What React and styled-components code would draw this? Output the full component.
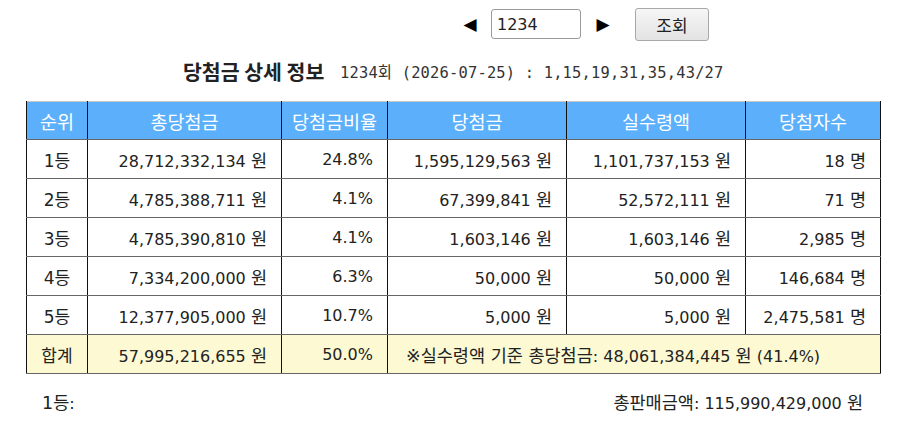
import React from 'react';
import styled, { createGlobalStyle } from 'styled-components';

const GlobalStyle = createGlobalStyle`
  body {
    margin: 0;
    background: #fff;
    font-family: "DejaVu Sans", "Noto Sans CJK KR", sans-serif;
    color: #222;
  }
`;

const Page = styled.div`
  width: 900px;
  height: 425px;
  overflow: hidden;
`;

const Nav = styled.div`
  display: flex;
  align-items: center;
  height: 34px;
  padding: 7px 0 0 462px;
`;

const Arrow = styled.button`
  background: none;
  border: none;
  padding: 0;
  font-size: 17px;
  line-height: 1;
  color: #000;
  width: 16px;
  margin: ${(p) => p.$m};
  cursor: pointer;
  font-family: "DejaVu Sans", sans-serif;
`;

const RoundInput = styled.input`
  width: 90px;
  height: 30px;
  box-sizing: border-box;
  border: 1px solid #9a9a9a;
  border-radius: 3px;
  padding: 0 5px;
  font-size: 16px;
  font-family: "DejaVu Sans", sans-serif;
  color: #222;
`;

const SearchButton = styled.button`
  width: 74px;
  height: 33px;
  border: 1px solid #a8a8a8;
  border-radius: 3px;
  background: linear-gradient(#f6f6f6, #e3e3e3);
  font-size: 17px;
  font-family: "Noto Sans CJK KR", sans-serif;
  color: #222;
  margin-left: 24px;
`;

const InfoLine = styled.div`
  display: flex;
  align-items: center;
  height: 60px;
  padding-left: 183px;
`;

const Title = styled.h2`
  margin: 0;
  font-size: 20.5px;
  font-weight: bold;
  font-family: "Noto Sans CJK KR", sans-serif;
  color: #222;
  width: 157px;
`;

const DrawInfo = styled.span`
  font-family: "DejaVu Sans Mono", "Noto Sans CJK KR", monospace;
  font-size: 15.4px;
  letter-spacing: 0.2px;
  color: #333;
`;

const Table = styled.table`
  margin-left: 26px;
  width: 854px;
  border-collapse: collapse;
  border-top: 1px solid #c8c8c8;
  border-bottom: 1px solid #666;
  table-layout: fixed;
`;

const Th = styled.th`
  background: #5cb0fb;
  color: #fff;
  font-weight: normal;
  font-size: 18.5px;
  font-family: "Noto Sans CJK KR", sans-serif;
  height: 37px;
  padding: 0;
  border-left: 1px solid #111;
  border-right: 1px solid #111;
  border-bottom: 1px solid #666;
`;

const Row = styled.tr`
  background: ${(p) => (p.$total ? '#fcf9d3' : '#fff')};
`;

const Td = styled.td`
  height: 38px;
  padding: ${(p) => (p.$align === 'left' ? '0 0 0 18px' : '0 14px 0 0')};
  text-align: ${(p) => p.$align || 'right'};
  font-size: 16px;
  white-space: nowrap;
  color: #222;
  border-left: 1px solid #111;
  border-right: 1px solid #111;
  border-bottom: 1px solid #666;
`;

const Unit = styled.span`
  font-size: 17.5px;
`;

const RankTd = styled(Td)`
  text-align: center;
  padding: 0;
  font-size: 17px;
`;

const Footer = styled.div`
  display: flex;
  justify-content: space-between;
  align-items: center;
  height: 54px;
  padding: 0 37px 0 42px;
  font-size: 16px;
`;

const rows = [
  ['1등', '28,712,332,134', '24.8%', '1,595,129,563', '1,101,737,153', '18'],
  ['2등', '4,785,388,711', '4.1%', '67,399,841', '52,572,111', '71'],
  ['3등', '4,785,390,810', '4.1%', '1,603,146', '1,603,146', '2,985'],
  ['4등', '7,334,200,000', '6.3%', '50,000', '50,000', '146,684'],
  ['5등', '12,377,905,000', '10.7%', '5,000', '5,000', '2,475,581'],
];

const cols = [
  ['순위', 61],
  ['총당첨금', 194],
  ['당첨금비율', 106],
  ['당첨금', 179],
  ['실수령액', 179],
  ['당첨자수', 135],
];

export default function App() {
  return (
    <Page>
      <GlobalStyle />
      <Nav>
        <Arrow $m="0 13px 0 0">◀</Arrow>
        <RoundInput defaultValue="1234" />
        <Arrow $m="0 0 0 14px">▶</Arrow>
        <SearchButton>조회</SearchButton>
      </Nav>
      <InfoLine>
        <Title>당첨금 상세 정보</Title>
        <DrawInfo>1234회 (2026-07-25) : 1,15,19,31,35,43/27</DrawInfo>
      </InfoLine>
      <Table>
        <colgroup>
          {cols.map(([name, w]) => (
            <col key={name} style={{ width: w }} />
          ))}
        </colgroup>
        <thead>
          <tr>
            {cols.map(([name]) => (
              <Th key={name}>{name}</Th>
            ))}
          </tr>
        </thead>
        <tbody>
          {rows.map((r) => (
            <Row key={r[0]}>
              <RankTd>{r[0]}</RankTd>
              <Td>{r[1]} <Unit>원</Unit></Td>
              <Td>{r[2]}</Td>
              <Td>{r[3]} <Unit>원</Unit></Td>
              <Td>{r[4]} <Unit>원</Unit></Td>
              <Td>{r[5]} <Unit>명</Unit></Td>
            </Row>
          ))}
          <Row $total>
            <RankTd>합계</RankTd>
            <Td>57,995,216,655 <Unit>원</Unit></Td>
            <Td>50.0%</Td>
            <Td colSpan={3} $align="left">
              <Unit>※실수령액 기준 총당첨금</Unit>: 48,061,384,445 <Unit>원</Unit> (41.4%)
            </Td>
          </Row>
        </tbody>
      </Table>
      <Footer>
        <span>
          <Unit>1등</Unit>:
        </span>
        <span>
          <Unit>총판매금액</Unit>: 115,990,429,000 <Unit>원</Unit>
        </span>
      </Footer>
    </Page>
  );
}
